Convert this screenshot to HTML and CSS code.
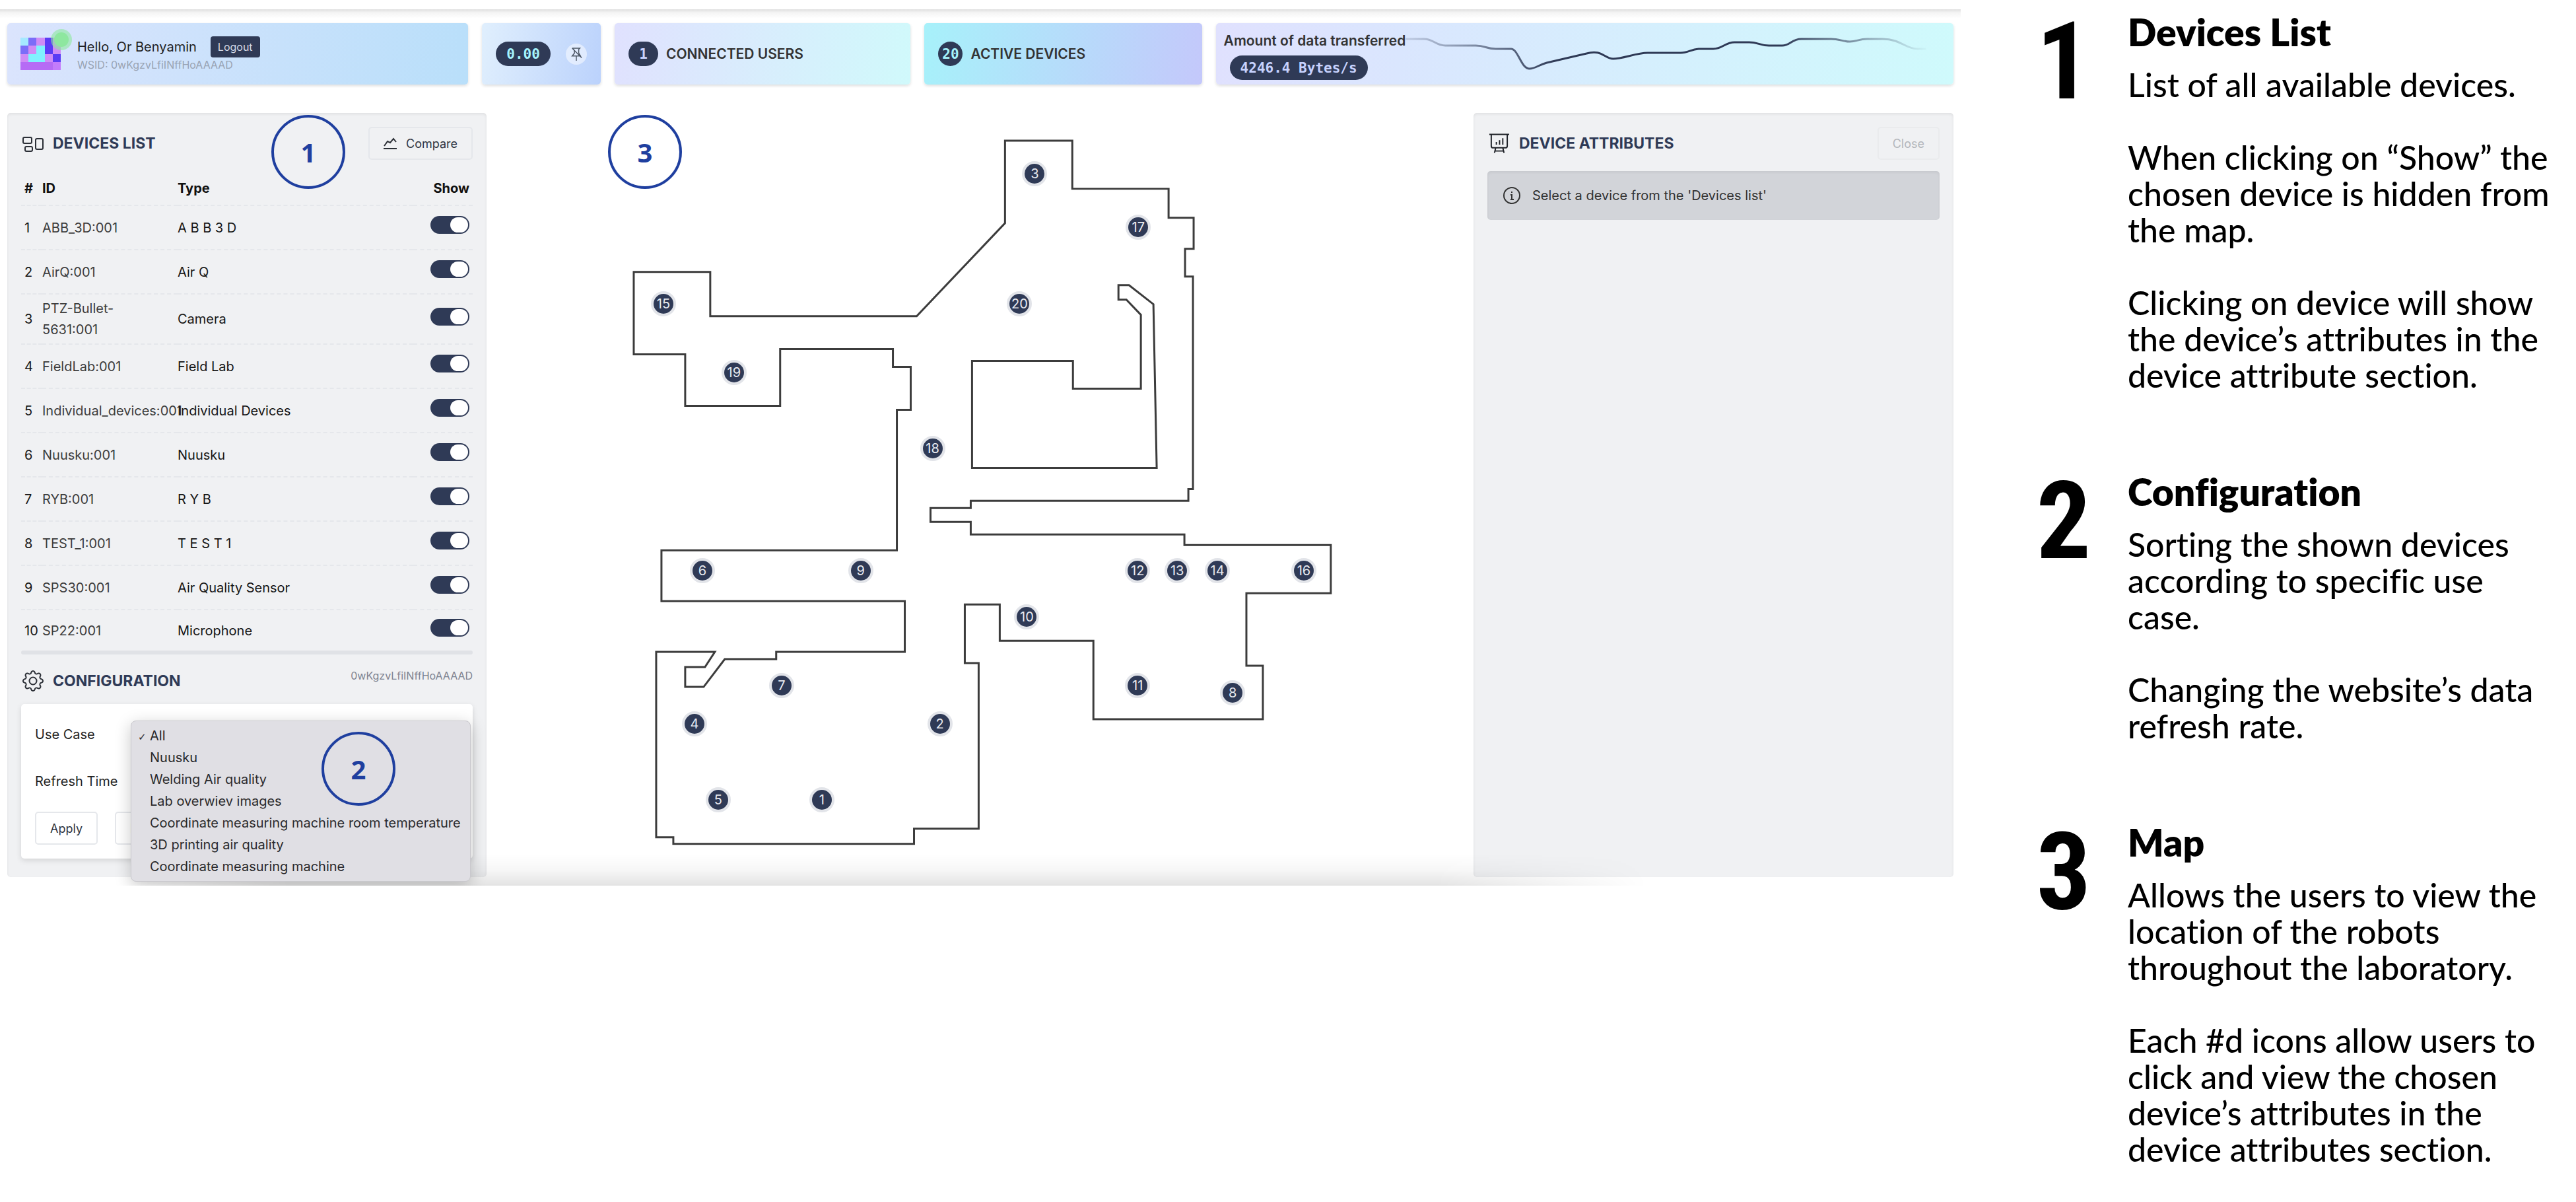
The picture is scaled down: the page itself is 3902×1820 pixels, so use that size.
FILE: index.html
```html
<!DOCTYPE html>
<html lang="en">
<head>
<meta charset="utf-8">
<title>Lab devices dashboard guide</title>
<link rel="stylesheet" href="styles.css">
</head>
<body>
<div class="page">
  <div class="dashboard">
    <header class="topbar">
      <section class="card card-user">
        <div class="avatar">
          <svg viewBox="0 0 5 4" preserveAspectRatio="none" shape-rendering="crispEdges" aria-hidden="true">
            <path fill="#d08cf5" d="M0 0h5v4H0z"/>
            <path fill="#a5e8ff" d="M0 0h1v1H0z"/>
            <path fill="#7c6df8" d="M1 0h1v1H1zM0 1h1v1H0z"/>
            <path fill="#5b3cf5" d="M3 0h1v2H3zM4 2h1v1H4z"/>
            <path fill="#80f2ff" d="M2 1h1v2H1V2h1z"/>
            <path fill="#b66bf5" d="M0 3h4v1H0z"/>
            <path fill="#c47cfb" d="M4 3h1v1H4z"/>
          </svg>
          <span class="online"></span>
        </div>
        <div class="who">
          <div class="who-line">Hello, Or Benyamin <button class="logout" type="button">Logout</button></div>
          <div class="wsid">WSID: 0wKgzvLfiINffHoAAAAD</div>
        </div>
      </section>
      <section class="card card-value">
        <span class="badge cyan">0.00</span>
        <button class="pin-toggle" type="button" aria-label="Unpin">
          <svg viewBox="0 0 20 24" fill="none" stroke="#4b5563" stroke-width="1.6" aria-hidden="true">
            <path d="M3 2h13l-2 2v6l3 5H3l4-5-1-6M10 15v8M3 2l16 16"/>
          </svg>
        </button>
      </section>
      <section class="card card-users"><span class="badge lilac">1</span><span class="stat">CONNECTED USERS</span></section>
      <section class="card card-active"><span class="badge round cyan">20</span><span class="stat">ACTIVE DEVICES</span></section>
      <section class="card card-data">
        <div class="data-info">
          <span class="stat">Amount of data transferred</span>
          <span class="badge lilac">4246.4 Bytes/s</span>
        </div>
        <svg class="spark" viewBox="2134 35 826 93" preserveAspectRatio="none" aria-hidden="true">
          <defs>
            <linearGradient id="fade" gradientUnits="userSpaceOnUse" x1="2120" x2="2925" y1="0" y2="0">
              <stop offset="0" stop-color="#2f3a56" stop-opacity="0.1"/>
              <stop offset="0.3" stop-color="#2f3a56"/>
              <stop offset="0.72" stop-color="#2f3a56"/>
              <stop offset="1" stop-color="#2f3a56" stop-opacity="0"/>
            </linearGradient>
          </defs>
          <path fill="none" stroke="url(#fade)" stroke-width="3" stroke-linejoin="round" d="M2134 59H2162C2176 59 2180 69 2194 69H2240C2254 69 2256 74 2270 74L2293 74C2304 74 2308 104 2321 104C2330 104 2335 98 2347 95L2407 81C2430 74 2434 89 2447 89C2462 89 2482 80 2499 80H2549C2560 80 2564 75 2576 74H2598C2612 74 2616 64 2630 64H2650C2664 63 2668 69 2682 69H2702C2714 69 2716 59 2731 59H2776C2788 59 2794 63 2804 63C2814 63 2818 59 2830 59H2854C2880 59 2888 74 2906 74H2919"/>
        </svg>
      </section>
    </header>

    <main class="workspace">
      <aside class="panel">
        <div class="panel-head">
          <svg class="icon" viewBox="0 0 32 32" fill="none" stroke="#2b2f36" stroke-width="2" aria-hidden="true">
            <rect x="1" y="7" width="13" height="9" rx="2"/><rect x="4" y="21" width="11" height="7" rx="2"/><rect x="20" y="9" width="11" height="16" rx="2"/>
          </svg>
          <h2>DEVICES LIST</h2>
          <button class="btn push" type="button">
            <svg class="btn-icon" viewBox="0 0 20 20" fill="none" stroke="#2b2f36" stroke-width="2" aria-hidden="true"><path d="M1 14l5-7 4 2 5-6 4 5M0 18h20"/></svg>
            Compare
          </button>
        </div>
        <table class="devices">
          <thead><tr><th class="c-num">#</th><th class="c-id">ID</th><th>Type</th><th class="c-show">Show</th></tr></thead>
          <tbody>
            <tr><td>1</td><td class="id">ABB_3D:001</td><td>A B B 3 D</td><td class="c-show"><input type="checkbox" class="switch" aria-label="Show ABB_3D:001" checked></td></tr>
            <tr><td>2</td><td class="id">AirQ:001</td><td>Air Q</td><td class="c-show"><input type="checkbox" class="switch" aria-label="Show AirQ:001" checked></td></tr>
            <tr><td>3</td><td class="id">PTZ-Bullet-5631:001</td><td>Camera</td><td class="c-show"><input type="checkbox" class="switch" aria-label="Show PTZ-Bullet-5631:001" checked></td></tr>
            <tr><td>4</td><td class="id">FieldLab:001</td><td>Field Lab</td><td class="c-show"><input type="checkbox" class="switch" aria-label="Show FieldLab:001" checked></td></tr>
            <tr><td>5</td><td class="id">Individual_devices:001</td><td>Individual Devices</td><td class="c-show"><input type="checkbox" class="switch" aria-label="Show Individual_devices:001" checked></td></tr>
            <tr><td>6</td><td class="id">Nuusku:001</td><td>Nuusku</td><td class="c-show"><input type="checkbox" class="switch" aria-label="Show Nuusku:001" checked></td></tr>
            <tr><td>7</td><td class="id">RYB:001</td><td>R Y B</td><td class="c-show"><input type="checkbox" class="switch" aria-label="Show RYB:001" checked></td></tr>
            <tr><td>8</td><td class="id">TEST_1:001</td><td>T E S T 1</td><td class="c-show"><input type="checkbox" class="switch" aria-label="Show TEST_1:001" checked></td></tr>
            <tr><td>9</td><td class="id">SPS30:001</td><td>Air Quality Sensor</td><td class="c-show"><input type="checkbox" class="switch" aria-label="Show SPS30:001" checked></td></tr>
            <tr><td>10</td><td class="id">SP22:001</td><td>Microphone</td><td class="c-show"><input type="checkbox" class="switch" aria-label="Show SP22:001" checked></td></tr>
          </tbody>
        </table>
        <hr class="divider">
        <div class="panel-head config-head">
          <svg class="icon" viewBox="0 0 16 16" fill="#2b2f36" aria-hidden="true">
            <path d="M8 4.754a3.246 3.246 0 1 0 0 6.492 3.246 3.246 0 0 0 0-6.492zM5.754 8a2.246 2.246 0 1 1 4.492 0 2.246 2.246 0 0 1-4.492 0z"/>
            <path d="M9.796 1.343c-.527-1.79-3.065-1.79-3.592 0l-.094.319a.873.873 0 0 1-1.255.52l-.292-.16c-1.64-.892-3.433.902-2.54 2.541l.159.292a.873.873 0 0 1-.52 1.255l-.319.094c-1.79.527-1.79 3.065 0 3.592l.319.094a.873.873 0 0 1 .52 1.255l-.16.292c-.892 1.64.901 3.434 2.541 2.54l.292-.159a.873.873 0 0 1 1.255.52l.094.319c.527 1.79 3.065 1.79 3.592 0l.094-.319a.873.873 0 0 1 1.255-.52l.292.16c1.64.893 3.434-.902 2.54-2.541l-.159-.292a.873.873 0 0 1 .52-1.255l.319-.094c1.79-.527 1.79-3.065 0-3.592l-.319-.094a.873.873 0 0 1-.52-1.255l.16-.292c.893-1.64-.902-3.433-2.541-2.54l-.292.159a.873.873 0 0 1-1.255-.52l-.094-.319zm-2.633.283c.246-.835 1.428-.835 1.674 0l.094.319a1.873 1.873 0 0 0 2.693 1.115l.291-.16c.764-.415 1.6.42 1.184 1.185l-.159.292a1.873 1.873 0 0 0 1.116 2.692l.318.094c.835.246.835 1.428 0 1.674l-.319.094a1.873 1.873 0 0 0-1.115 2.693l.16.291c.415.764-.42 1.6-1.185 1.184l-.291-.159a1.873 1.873 0 0 0-2.693 1.116l-.094.318c-.246.835-1.428.835-1.674 0l-.094-.319a1.873 1.873 0 0 0-2.692-1.115l-.292.16c-.764.415-1.6-.42-1.184-1.185l.159-.291A1.873 1.873 0 0 0 1.945 8.93l-.319-.094c-.835-.246-.835-1.428 0-1.674l.319-.094A1.873 1.873 0 0 0 3.06 4.377l-.16-.292c-.415-.764.42-1.6 1.185-1.184l.292.159a1.873 1.873 0 0 0 2.692-1.115l.094-.319z"/>
          </svg>
          <h2>CONFIGURATION</h2>
          <span class="session push">0wKgzvLfiINffHoAAAAD</span>
        </div>
        <form class="config">
          <div class="field"><label for="use-case">Use Case</label><select id="use-case"><option>All</option></select></div>
          <div class="field"><label for="refresh">Refresh Time</label><input id="refresh" type="text"></div>
          <div class="actions"><button class="btn white" type="button">Apply</button><button class="btn white" type="button">Reset</button></div>
          <ul class="menu" role="listbox" aria-label="Use Case">
            <li role="option" aria-selected="true">All</li>
            <li role="option">Nuusku</li>
            <li role="option">Welding Air quality</li>
            <li role="option">Lab overwiev images</li>
            <li role="option">Coordinate measuring machine room temperature</li>
            <li role="option">3D printing air quality</li>
            <li role="option">Coordinate measuring machine</li>
          </ul>
          <span class="callout callout-2">2</span>
        </form>
        <span class="callout callout-1">1</span>
      </aside>

      <section class="map">
        <span class="callout callout-3">3</span>
        <div class="plan">
          <svg viewBox="935 171 1100 1157" fill="none" stroke="#3c3c3c" stroke-width="3" aria-label="Laboratory floor plan">
            <path d="M1523 213H1625V286H1771V330H1809V377H1796V419H1808V741H1801V759H1471V770H1410V791H1471V810H1795V826H2017V899H1889V1009H1914V1090H1657V971H1515V916H1462V1005H1483V1256H1385V1279H1020V1269H994V988H1083L1068 1011H1038V1041H1066L1098 999H1176V988H1371V911H1002V834H1359V621H1380V556H1353V529H1182V615H1038V537H960V412H1076V479H1389L1523 338Z"/>
            <path d="M1473 547H1626V589H1729V477L1707 454H1695V432H1711L1748 461L1753 709H1473Z"/>
          </svg>
          <button class="pin" type="button" style="--x:633;--y:92">3</button>
          <button class="pin" type="button" style="--x:790;--y:173">17</button>
          <button class="pin" type="button" style="--x:70;--y:289">15</button>
          <button class="pin" type="button" style="--x:610;--y:289">20</button>
          <button class="pin" type="button" style="--x:177;--y:393">19</button>
          <button class="pin" type="button" style="--x:478;--y:509">18</button>
          <button class="pin" type="button" style="--x:129;--y:694">6</button>
          <button class="pin" type="button" style="--x:369;--y:694">9</button>
          <button class="pin" type="button" style="--x:789;--y:694">12</button>
          <button class="pin" type="button" style="--x:849;--y:694">13</button>
          <button class="pin" type="button" style="--x:910;--y:694">14</button>
          <button class="pin" type="button" style="--x:1041;--y:694">16</button>
          <button class="pin" type="button" style="--x:621;--y:764">10</button>
          <button class="pin" type="button" style="--x:249;--y:868">7</button>
          <button class="pin" type="button" style="--x:789;--y:868">11</button>
          <button class="pin" type="button" style="--x:933;--y:879">8</button>
          <button class="pin" type="button" style="--x:117;--y:926">4</button>
          <button class="pin" type="button" style="--x:489;--y:926">2</button>
          <button class="pin" type="button" style="--x:153;--y:1041">5</button>
          <button class="pin" type="button" style="--x:310;--y:1041">1</button>
        </div>
      </section>

      <aside class="panel">
        <div class="panel-head">
          <svg class="icon" viewBox="0 0 33 32" fill="none" stroke="#1f2228" stroke-width="2" aria-hidden="true">
            <path d="M1 2h31M4 2v18q0 3 3 3h19q3 0 3-3V2M11 23l-2 8M22 23l2 8M10 28h13M12 14v4M17 11v7M22 8v10"/>
          </svg>
          <h2>DEVICE ATTRIBUTES</h2>
          <button class="btn push" type="button" disabled>Close</button>
        </div>
        <div class="notice">
          <svg class="notice-icon" viewBox="0 0 26 26" fill="none" stroke="#333" stroke-width="2" aria-hidden="true"><circle cx="13" cy="13" r="12"/><path d="M13 7v2M11 12h2v7M11 19h5"/></svg>
          Select a device from the 'Devices list'
        </div>
      </aside>
    </main>
  </div>

  <aside class="guide">
    <section class="step">
      <span class="step-num">1</span>
      <div class="step-text">
        <h3>Devices List</h3>
        <p>List of all available devices.</p>
        <p>When clicking on “Show” the chosen device is hidden from the map.</p>
        <p>Clicking on device will show the device’s attributes in the device attribute section.</p>
      </div>
    </section>
    <section class="step">
      <span class="step-num">2</span>
      <div class="step-text">
        <h3>Configuration</h3>
        <p>Sorting the shown devices according to specific use case.</p>
        <p>Changing the website’s data refresh rate.</p>
      </div>
    </section>
    <section class="step">
      <span class="step-num">3</span>
      <div class="step-text">
        <h3>Map</h3>
        <p>Allows the users to view the location of the robots throughout the laboratory.</p>
        <p>Each #d icons allow users to click and view the chosen device’s attributes in the device attributes section.</p>
      </div>
    </section>
  </aside>
</div>
</body>
</html>
```
FILE: styles.css
```css
* { box-sizing: border-box; }
body { margin: 0; background: #fff; font-family: Inter, "Liberation Sans", sans-serif; font-size: 20px; color: #1f1f1f; }
h2, h3, p, ul { margin: 0; padding: 0; }
button, input, select { font-family: inherit; }

.page { display: grid; grid-template-columns: minmax(0, 2970fr) minmax(0, 932fr); align-items: start; }

/* Dashboard */
.dashboard { position: relative; overflow: hidden; padding: 14px 11px 13px; }
.dashboard::before { content: ""; position: absolute; left: 0; right: 0; top: 14px; height: 14px; background: linear-gradient(#e3e3e3, #e6e6e6 2px, #f4f4f4 5px, #fff); }
.dashboard::after { content: ""; position: absolute; left: 7%; right: 16%; bottom: 0; height: 48px; background: linear-gradient(rgba(0, 0, 0, 0), rgba(0, 0, 0, 0.03) 50%, rgba(0, 0, 0, 0.11)); -webkit-mask-image: linear-gradient(90deg, transparent, #000 10%, #000 86%, transparent); mask-image: linear-gradient(90deg, transparent, #000 10%, #000 86%, transparent); pointer-events: none; }

.topbar { display: grid; grid-template-columns: 698fr 180fr 448fr 420fr 1117fr; gap: 21px; margin-top: 21px; height: 93px; }
.card { display: flex; align-items: center; min-width: 0; padding: 0 21px; border-radius: 5px; box-shadow: 0 2px 4px rgba(0, 0, 0, 0.14); }
.card-user { background: linear-gradient(100deg, #dbe4fd, #b9dffa); gap: 25px; padding: 0 20px; }
.card-value { background: linear-gradient(100deg, #e0effd, #bbd2fc); justify-content: space-between; }
.card-users { background: linear-gradient(100deg, #e0e1fe, #d0f9fb); gap: 12px; }
.card-active { background: linear-gradient(100deg, #a7f1fa, #c4c8fb); gap: 12px; }
.card-data { background: linear-gradient(95deg, #e0e1fe, #dae6fe 25%, #cffafc); padding: 0 0 0 12px; align-items: stretch; }

.avatar { position: relative; width: 61px; height: 49px; }
.avatar svg { display: block; width: 61px; height: 49px; }
.online { position: absolute; right: -12px; top: -8px; width: 22px; height: 22px; border-radius: 50%; background: #8ee79f; box-shadow: 0 0 0 5px rgba(142, 231, 159, 0.6); }
.who-line { display: flex; align-items: center; gap: 21px; height: 32px; white-space: nowrap; }
.logout { height: 32px; padding: 0 11px; border: 0; border-radius: 4px; background: #2f3a56; color: #d5dbe8; font-size: 16px; }
.wsid { font-size: 16px; line-height: 22px; color: #98a3b3; }

.badge { display: inline-flex; align-items: center; justify-content: center; height: 37px; padding: 0 16px; border-radius: 19px; background: #2f3a56; font: bold 21px "DejaVu Sans Mono", monospace; white-space: nowrap; }
.badge.round { width: 37px; padding: 0; }
.cyan { color: #a5f3fc; }
.lilac { color: #c7d2fe; }
.stat { font-size: 21px; font-weight: 600; color: #333; white-space: nowrap; }
.pin-toggle { display: flex; align-items: center; justify-content: center; width: 32px; height: 32px; padding: 0; border: 0; border-radius: 50%; background: rgba(255, 255, 255, 0.5); }
.pin-toggle svg { width: 18px; height: 22px; }
.data-info { display: flex; flex-direction: column; align-items: flex-start; padding-top: 14px; line-height: 26px; gap: 9px; }
.data-info .badge { margin-left: 9px; }
.spark { flex: 1; min-width: 0; height: 93px; }

/* Panels */
.workspace { display: grid; grid-template-columns: 726fr 1495fr 727fr; margin-top: 43px; }
.panel { position: relative; min-width: 0; min-height: 1157px; padding: 21px 21px 25px; border-radius: 5px; background: #f0f1f3; box-shadow: inset 0 2px 4px rgba(0, 0, 0, 0.07); }
.panel-head { display: flex; align-items: center; height: 50px; gap: 14px; margin-bottom: 17px; }
.icon { width: 32px; height: 32px; margin-left: 2px; }
h2 { font-size: 23px; font-weight: 700; color: #2f3a56; }
.push { margin-left: auto; }
.btn { display: flex; align-items: center; justify-content: center; gap: 14px; height: 50px; padding: 0 21px; border: 2px solid #e5e7eb; border-radius: 5px; background: transparent; color: #2f3440; font-size: 18px; }
.btn.white { background: #fff; }
.btn:disabled { color: #b3b6bb; border-color: #eaebed; }
.btn-icon { width: 20px; height: 20px; }

.devices { width: 100%; table-layout: fixed; border-collapse: collapse; color: #161616; }
.devices th { height: 52px; padding: 0; text-align: left; font-weight: 700; color: #111; border-bottom: 2px dashed #e5e7eb; }
.devices td { height: 67px; padding: 5px 0; line-height: 32px; border-bottom: 2px dashed #e5e7eb; }
.devices tr > :first-child { padding-left: 5px; }
.devices tr > :last-child { padding-right: 5px; }
.devices tbody tr:last-child td { height: 62px; border-bottom: 0; }
.devices .id { color: #3d3d3d; }
.devices td:nth-child(3) { position: relative; }
.c-num { width: 32px; }
.c-id { width: 205px; padding-right: 100px; }
td.id { padding-right: 60px; }
.devices .c-show { width: 90px; text-align: right; }
.switch { appearance: none; display: block; position: relative; width: 59px; height: 27px; margin: 0 0 8px auto; border-radius: 14px; background: #2f3a56; }
.switch::after { content: ""; position: absolute; right: 2px; top: 2px; width: 27px; height: 23px; border-radius: 12px; background: #fff; }
.divider { height: 6px; margin: 0; border: 0; border-radius: 3px; background: #e0e2e6; }

.config-head { margin: 15px 0 10px; }
.session { align-self: flex-start; font-size: 16px; line-height: 34px; color: #7d8290; }
.config { position: relative; display: grid; gap: 21px; padding: 21px; border-radius: 5px; background: #fff; box-shadow: 0 3px 8px rgba(0, 0, 0, 0.12); }
.field { display: flex; align-items: center; height: 50px; gap: 24px; }
.field label { width: 130px; white-space: nowrap; }
.field select, .field input { flex: 1; min-width: 0; height: 40px; border: 1px solid #d9dce2; border-radius: 5px; background: #fff; }
.actions { display: flex; gap: 26px; }
.menu { position: absolute; z-index: 2; left: 166px; right: 3px; top: 25px; padding: 6px 0 5px; list-style: none; border: 1px solid #c9c8cd; border-radius: 8px; background: #e0dfe4; box-shadow: 0 6px 24px rgba(0, 0, 0, 0.22); color: #2a2a2c; }
.menu li { padding-left: 28px; line-height: 33px; white-space: nowrap; }
.menu [aria-selected="true"] { padding-left: 10px; }
.menu [aria-selected="true"]::before { content: "✓"; display: inline-block; width: 18px; font: bold 15px "DejaVu Sans", sans-serif; }

.callout { position: absolute; z-index: 3; display: flex; align-items: center; justify-content: center; width: 112px; height: 112px; border: 4px solid #1f3f9f; border-radius: 50%; color: #1f3f9f; font: bold 40px "Open Sans", "Noto Sans", sans-serif; }
.callout-1 { left: 400px; top: 3px; }
.callout-2 { left: 455px; top: 42px; }
.callout-3 { left: 184px; top: 3px; }

/* Floor plan */
.map { position: relative; display: flex; justify-content: center; align-items: flex-start; }
.plan { position: relative; width: 73.5%; }
.plan svg { display: block; width: 100%; }
.pin { position: absolute; left: calc(var(--x) / 1100 * 100%); top: calc(var(--y) / 1157 * 100%); transform: translate(-50%, -50%); width: 38px; height: 38px; padding: 0; border: 4px solid #e2e4e9; border-radius: 50%; background: #2f3a56; color: #e8eaf0; font-size: 20px; line-height: 30px; text-align: center; }

.notice { display: flex; align-items: center; gap: 18px; height: 74px; padding: 0 24px; border-radius: 5px; background: #d2d4d9; color: #333; box-shadow: inset 0 2px 4px rgba(0, 0, 0, 0.06); white-space: nowrap; }
.notice-icon { width: 26px; height: 26px; }

/* Guide column */
.guide { display: grid; gap: 114px; padding: 14px 26px 0 106px; color: #000; font-family: Lato, "Open Sans", sans-serif; font-variant-ligatures: none; }
.step { display: grid; grid-template-columns: 100px minmax(0, 1fr); gap: 47px; }
.step-num { text-align: center; font: bold 164px/158px "Liberation Sans Narrow", "Roboto Condensed", "Liberation Sans", sans-serif; }
.step-text { display: grid; gap: 55px; font-size: 50px; font-weight: 500; line-height: 55px; }
.step-text h3 { margin-bottom: -36px; font-size: 57px; font-weight: 800; line-height: 68px; }
```
